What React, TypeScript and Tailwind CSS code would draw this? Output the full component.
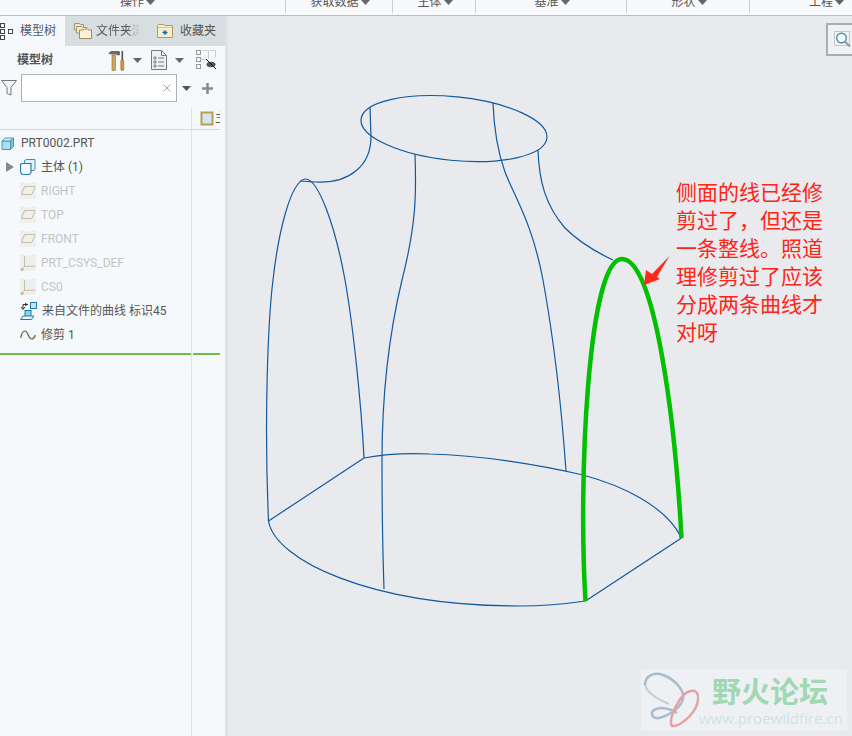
const FONT = "font-['Roboto','Noto_Sans_CJK_SC',sans-serif]";
const BLUE = "#11599f";

function Caret({ color = "#666" }: { color?: string }) {
  return (
    <svg width="9" height="5" viewBox="0 0 9 5" className="flex-none">
      <path d="M0 0h9L4.500 5z" fill={color} />
    </svg>
  );
}

function ToolGroup({ label, width, shift = "translate-x-[1px]" }: { label: string; width: string; shift?: string }) {
  return (
    <div className={`${width} flex-none h-[13px] border-r border-[#c9ccd0] flex justify-center items-start overflow-hidden`}>
      <div className={`flex items-center -mt-[6px] h-[16px] ${shift}`}>
        <span className="text-[12px] leading-[16px] text-[#555]">{label}</span>
        <span className="ml-[2px]">
          <Caret />
        </span>
      </div>
    </div>
  );
}

function TreeIcon() {
  return (
    <svg width="14" height="18" viewBox="0 0 14 18" className="flex-none" fill="none" stroke="#444" strokeWidth="1">
      <rect x="0.500" y="1.500" width="4" height="4" />
      <rect x="0.500" y="7.500" width="4" height="4" />
      <rect x="0.500" y="13.500" width="4" height="4" />
      <rect x="8.500" y="7.500" width="4" height="4" />
    </svg>
  );
}

function FolderIcon({ multi }: { multi?: boolean }) {
  if (multi) {
    return (
      <svg width="20" height="20" viewBox="0 0 20 20" className="flex-none">
        <path d="M1.500 4V2.500h5l1 1h3V9h-9.500z" fill="#f1e2c2" stroke="#a89474" />
        <path d="M3.500 8V5.500h5l1 1h4V12h-10z" fill="#f6e9cc" stroke="#a89474" />
        <path d="M6.500 17.500V9h4l1-1h3l1 1h3v8.500z" fill="#fdf1d6" stroke="#a08a60" />
      </svg>
    );
  }
  return (
    <svg width="18" height="16" viewBox="0 0 18 16" className="flex-none">
      <path d="M1.500 14.500V2.500l1-1h5l1 1h8v12z" fill="#fbeecb" stroke="#b09a6c" />
      <rect x="2" y="4" width="14" height="1" fill="#d8c49a" />
      <path d="M9 7v5M6.500 9.500h5M7.300 7.800l3.400 3.400M10.700 7.800l-3.400 3.400" stroke="#0f6c9c" strokeWidth="1" />
    </svg>
  );
}

function HammerIcon() {
  return (
    <svg width="18" height="21" viewBox="0 0 18 21" className="flex-none">
      <path d="M0 3.500 3 1h8l1 1v3l-2 0.500-2-1H3.500z" fill="#6b6b6b" />
      <rect x="4" y="5" width="3.500" height="15.500" fill="#c9a860" stroke="#8a7342" strokeWidth="0.600" />
      <rect x="13.500" y="1" width="1.600" height="9" fill="#555" />
      <rect x="12.800" y="10" width="3" height="10.500" rx="1" fill="#c8933a" stroke="#8a6428" strokeWidth="0.500" />
    </svg>
  );
}

function ListIcon() {
  return (
    <svg width="16" height="20" viewBox="0 0 16 20" className="flex-none" fill="none">
      <path d="M0.500 0.500h10l5 5v14H0.500z" fill="#edf1f3" stroke="#777" />
      <path d="M10.500 0.500v5h5" stroke="#777" />
      <g stroke="#777">
        <circle cx="4" cy="8" r="1.200" />
        <circle cx="4" cy="12" r="1.200" />
        <circle cx="4" cy="16" r="1.200" />
        <path d="M7 8h6M7 12h6M7 16h6" />
      </g>
    </svg>
  );
}

function HideTreeIcon() {
  return (
    <svg width="21" height="20" viewBox="0 0 21 20" className="flex-none" fill="none">
      <rect x="0.500" y="0.500" width="4" height="4" stroke="#999" />
      <rect x="0.500" y="7.500" width="4" height="4" stroke="#999" />
      <rect x="0.500" y="14.500" width="4" height="4" stroke="#999" />
      <path d="M7.500 0.500h5v8M14.500 0.500h5v7M4.500 9.500h4" stroke="#ccc" />
      <ellipse cx="15" cy="14.500" rx="4.500" ry="2.800" fill="#555" />
      <path d="M10 9l10 10" stroke="#111" />
    </svg>
  );
}

function PlaneIcon() {
  return (
    <span className="w-[16px] h-[16px] flex-none bg-[#eeefed] flex items-center justify-center">
      <svg width="16" height="16" viewBox="0 0 16 16" fill="none">
        <path d="M4.500 3.500H15L12 11.500H1.500z" fill="#f1f0ea" stroke="#c4c0a8" />
      </svg>
    </span>
  );
}

function CsysIcon() {
  return (
    <span className="w-[16px] h-[16px] flex-none bg-[#eeefed] flex items-center justify-center">
      <svg width="16" height="16" viewBox="0 0 16 16" fill="none" stroke="#c4c0a8">
        <path d="M4.500 1v10.500M4.500 11.500l11-0.500M4.500 11.500 1 15" />
        <rect x="0.500" y="13" width="3" height="3" fill="#c4c0a8" stroke="none" />
      </svg>
    </span>
  );
}

function BodyIcon() {
  return (
    <svg width="16" height="16" viewBox="0 0 16 16" className="flex-none">
      <path d="M4.500 5.500V1.500l2-1h8.500v9.500l-1 1.500H9z" fill="#dff2fb" stroke="#3f8fb5" />
      <path d="M0.500 13V5.500l1.500-1h9v9l-1.500 2H2z" fill="#f6fcff" stroke="#2c7ea8" strokeWidth="1.200" />
    </svg>
  );
}

function PartIcon() {
  return (
    <svg width="14" height="13" viewBox="0 0 14 13" className="flex-none">
      <path d="M1 4h8.500v8.500H1z" fill="#a8dff3" stroke="#4a95b5" />
      <path d="M1 4l3-3h8.500L9.500 4z" fill="#cfeffa" stroke="#4a95b5" />
      <path d="M9.500 4l3-3v8.500l-3 3z" fill="#7cc5e2" stroke="#4a95b5" />
    </svg>
  );
}

function ImportIcon() {
  return (
    <svg width="17" height="18" viewBox="0 0 17 18" className="flex-none" fill="none">
      <rect x="10.500" y="0.500" width="6" height="6" fill="#bde6f6" stroke="#1f7ba5" />
      <path d="M3 7V2.500h5M1 5l2 2.500L5 5M5 1l2 1.500L5 4" stroke="#333" />
      <rect x="5" y="8.500" width="6" height="6" fill="#8fd4ee" stroke="#1f7ba5" />
      <path d="M0.500 17.500 3 14h11l-2.500 3.500z" fill="#e8f6fb" stroke="#1f7ba5" />
    </svg>
  );
}

function TrimIcon() {
  return (
    <svg width="16" height="10" viewBox="0 0 16 10" className="flex-none" fill="none">
      <path d="M0.800 8C1.500 3 3 1 5 1c3 0 3.500 8 6.500 8 1.800 0 3-1.500 3.800-4" stroke="#6a5a3a" strokeWidth="1.200" />
    </svg>
  );
}

function FilterIcon() {
  return (
    <svg width="16" height="16" viewBox="0 0 16 16" className="flex-none">
      <path d="M0.500 0.500h15l-5.500 7v7.500l-4-1.500V7.500z" fill="#f2f5f6" stroke="#777" />
    </svg>
  );
}

function Row({ icon, label, muted, caret }: { icon: React.ReactNode; label: string; muted?: boolean; caret?: boolean }) {
  return (
    <div className="h-[24px] flex items-center pl-[6px]">
      <span className="w-[14px] flex-none">
        {caret && (
          <svg width="8" height="10" viewBox="0 0 8 10">
            <path d="M0 0l8 5-8 5z" fill="#888" />
          </svg>
        )}
      </span>
      {icon}
      <span className={`ml-[5px] text-[12px] leading-none whitespace-nowrap ${muted ? "text-[#c4c4c4]" : "text-[#555]"}`}>{label}</span>
    </div>
  );
}

function Sidebar() {
  return (
    <div className="w-[228px] flex-none flex bg-[#f6f9fb]">
      <div className="w-[225px] flex-none flex flex-col">
        <div className="h-[30px] flex-none flex">
          <div className="w-[65px] flex-none flex items-center gap-[6px]">
            <TreeIcon />
            <span className="text-[12px] text-[#4f5a70]">模型树</span>
          </div>
          <div className="w-[160px] flex-none bg-[#d6dedf] flex items-center pl-[8px] overflow-hidden">
            <FolderIcon multi />
            <span className="ml-[3px] text-[12px] w-[44px] overflow-hidden whitespace-nowrap flex-none bg-gradient-to-r from-[#555] from-70% to-[#d6dedf] bg-clip-text text-transparent">文件夹浏</span>
            <span className="ml-[16px]">
              <FolderIcon />
            </span>
            <span className="ml-[6px] text-[12px] text-[#555] whitespace-nowrap">收藏夹</span>
          </div>
        </div>
        <div className="flex-1 flex flex-col min-h-0 w-[220px]">
          <div className="h-[25px] flex-none flex items-center pl-[17px] pt-[3px]">
            <span className="text-[12px] font-bold text-[#555] w-[91px] flex-none">模型树</span>
            <HammerIcon />
            <span className="ml-[7px]"><Caret /></span>
            <span className="ml-[9px]"><ListIcon /></span>
            <span className="ml-[8px]"><Caret /></span>
            <span className="ml-[12px]"><HideTreeIcon /></span>
          </div>
          <div className="h-[34px] flex-none flex items-center pl-[1px]">
            <FilterIcon />
            <div className="ml-[4px] w-[156px] h-[28px] flex-none border border-[#a9b3b5] bg-white flex items-center justify-end pr-[5px]">
              <svg width="8" height="8" viewBox="0 0 8 8"><path d="M0.500 0.500l7 7M7.500 0.500l-7 7" stroke="#aaa" /></svg>
            </div>
            <span className="ml-[5px]"><Caret color="#555" /></span>
            <svg width="11" height="11" viewBox="0 0 11 11" className="ml-[11px] flex-none"><path d="M5.500 0v11M0 5.500h11" stroke="#8a8a8a" strokeWidth="2.500" /></svg>
          </div>
          <div className="h-[25px] flex-none border-b border-[#d5d9db] flex justify-end items-end overflow-hidden">
            <div className="w-[29px] h-[22px] flex-none border-l border-[#e0e3e5] flex items-center pl-[8px] gap-[1px]">
              <svg width="14" height="15" viewBox="0 0 14 15" className="flex-none">
                <rect x="1.500" y="1.500" width="11" height="12" fill="#cfe9f3" stroke="#c19a55" strokeWidth="2" />
              </svg>
              <span className="text-[12px] text-[#555] whitespace-nowrap">主体</span>
            </div>
          </div>
          <div className="flex-1 flex min-h-0">
            <div className="w-[191px] flex-none">
              <div className="h-[24px] flex items-center pt-[2px] pl-[1px]">
                <PartIcon />
                <span className="ml-[6px] text-[12px] text-[#555]">PRT0002.PRT</span>
              </div>
              <div className="pt-[1px] flex flex-col">
                <Row icon={<BodyIcon />} label="主体 (1)" caret />
                <Row icon={<PlaneIcon />} label="RIGHT" muted />
                <Row icon={<PlaneIcon />} label="TOP" muted />
                <Row icon={<PlaneIcon />} label="FRONT" muted />
                <Row icon={<CsysIcon />} label="PRT_CSYS_DEF" muted />
                <Row icon={<CsysIcon />} label="CS0" muted />
                <Row icon={<ImportIcon />} label="来自文件的曲线 标识45" />
                <Row icon={<TrimIcon />} label="修剪 1" />
              </div>
              <div className="mt-[6px] h-[2px] bg-[#6cc04a]" />
            </div>
            <div className="w-[29px] flex-none border-l border-[#e0e3e5]">
              <div className="mt-[223px] h-[2px] ml-[1px] bg-[#6cc04a]" />
            </div>
          </div>
        </div>
      </div>
      <div className="w-[3px] flex-none bg-[#dfe1e3]" />
    </div>
  );
}

function Wireframe() {
  return (
    <svg className="absolute left-[-228px] top-[-16px]" width="852" height="736" viewBox="0 0 852 736" fill="none">
      <g stroke={BLUE} strokeWidth="1.200">
        <ellipse cx="454" cy="128.600" rx="93.400" ry="31.800" transform="rotate(5.800 454 128.600)" />
        <path d="M370 107L371 137C371 165 350 184 315 182C310 182 305 181 300 181" />
        <path d="M268.500 521C264 420 268 320 273 280C278 235 290 182 305 179C318 178 335 225 345 280C353 325 361 400 364 458" />
        <path d="M415 154C416.500 195 416 225 402 280C390 330 382 390 382 460C382 510 383 560 384 589" />
        <path d="M493 103C494 130 497 150 505 172C515 198 532 222 543 280C553 335 561 400 566 471" />
        <path d="M538 150C539 180 545 205 565 228C580 243 598 253 613 260" />
        <path d="M268.500 521L364 458" />
        <path d="M364 458C385 454 410 453 430 454C480 455 540 465 583 475C620 485 665 505 681 537" />
        <path d="M268.500 521C275 560 370 606 520 606C545 606 565 604 585.500 601" />
        <path d="M585.500 601L681.500 538" />
      </g>
      <path d="M585.500 601C578 480 588 259 622 259C655 259 675 420 681.500 538" stroke="#00c000" strokeWidth="4.500" />
      <path d="M644 285L646 270L652 274L669.500 256L657 277L660 279z" fill="#ff2a1a" />
    </svg>
  );
}

function Watermark() {
  return (
    <div className="absolute left-[413px] top-[653px] w-[206px] h-[62px] bg-[#eef0f3] flex items-start">
      <svg width="58" height="62" viewBox="0 0 58 62" className="flex-none" fill="none">
        <path d="M4 16C4 6 14 3 22 6C34 10 44 22 42 30C40 38 30 46 18 49C11 50 9 44 13 41C20 37 30 40 36 44" stroke="#a9bccb" strokeWidth="2.500" />
        <path d="M4 16C6 24 16 30 28 35" stroke="#c3cfd8" strokeWidth="2" />
        <path d="M57 26C54 18 44 22 38 32C32 42 28 52 31 57C38 58 50 48 55 38C57 33 58 30 57 26z" stroke="#e3a3a5" strokeWidth="2.500" />
      </svg>
      <div className="flex flex-col items-start pt-[3px] gap-[1px]">
        <span className="text-[29px] leading-[36px] font-bold text-[#a0d8b4] font-['Noto_Sans_CJK_SC',sans-serif] ml-[13px]">野火论坛</span>
        <span className="text-[15px] leading-[18px] text-[#cfe4e3] whitespace-nowrap font-['Open_Sans',sans-serif]">www.proewildfire.cn</span>
      </div>
    </div>
  );
}

function Canvas() {
  return (
    <div className="flex-1 bg-[#e8eaee] relative overflow-hidden">
      <Wireframe />
      <div className="absolute left-[448px] top-[161px] w-[150px] text-[21px] leading-[28px] text-[#ff2416] font-['Noto_Sans_CJK_SC',sans-serif]">
        <div>侧面的线已经修</div>
        <div>剪过了，但还是</div>
        <div>一条整线。照道</div>
        <div>理修剪过了应该</div>
        <div>分成两条曲线才</div>
        <div>对呀</div>
      </div>
      <div className="absolute right-0 top-[7px] w-[26px] h-[33px] border-2 border-[#aaacae] border-r-0 bg-[#f0f1f3] flex items-center pl-[6px]">
        <svg width="18" height="17" viewBox="0 0 18 17" className="flex-none" fill="none">
          <rect x="0.500" y="0.500" width="15" height="14" fill="#eef5f7" stroke="#c4c8cb" />
          <circle cx="7.500" cy="7" r="4.800" fill="#f8fcfd" stroke="#4a8ea5" strokeWidth="1.400" />
          <path d="M11 10.500l5 5" stroke="#9a9a9a" strokeWidth="2.200" />
        </svg>
      </div>
      <Watermark />
    </div>
  );
}

export default function App() {
  return (
    <div className={`w-[852px] h-[736px] overflow-hidden flex flex-col bg-[#e8eaee] ${FONT}`}>
      <div className="h-[16px] flex-none bg-[#f7f9fc] border-b border-[#b8bdbf] flex overflow-hidden">
        <ToolGroup label="操作" width="w-[286px]" shift="-translate-x-[5px]" />
        <ToolGroup label="获取数据" width="w-[107px]" />
        <ToolGroup label="主体" width="w-[83px]" />
        <ToolGroup label="基准" width="w-[151px]" />
        <ToolGroup label="形状" width="w-[123px]" />
        <ToolGroup label="工程" width="w-[152px]" />
      </div>
      <div className="flex-1 flex min-h-0">
        <Sidebar />
        <Canvas />
      </div>
    </div>
  );
}
